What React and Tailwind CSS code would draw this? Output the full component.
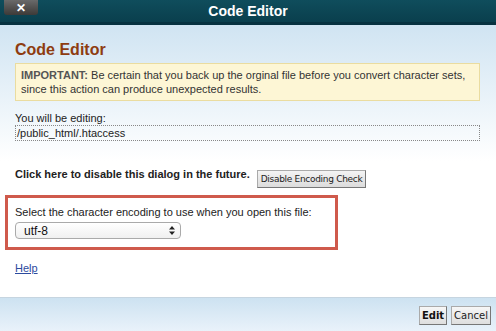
export default function App() {
  return (
    <div className="w-[496px] h-[331px] flex flex-col overflow-hidden bg-white" style={{ fontFamily: '"Liberation Sans", Arial, sans-serif' }}>
      {/* Title bar */}
      <div className="relative h-[25px] shrink-0 bg-gradient-to-b from-[#0f4d5c] to-[#0a3f4d] border-b-[3px] border-[#073240] flex items-center justify-center">
        <div className="absolute left-[4px] top-0 w-[34px] h-[15px] rounded-b-[3px] bg-gradient-to-b from-[#6a6a6a] to-[#3d3a38] flex items-center justify-center">
          <span className="text-white text-[12px] font-bold leading-none">✕</span>
        </div>
        <span className="text-white text-[14px] font-bold">Code Editor</span>
      </div>
      {/* Body */}
      <div className="flex-1 bg-gradient-to-b from-[#d0e4f2] via-white to-white flex flex-col px-[15px] pt-[15px]">
        <div className="text-[16px] font-bold text-[#8e3c10] leading-[20px]">Code Editor</div>
        <div className="mt-[3px] w-[465px] border border-[#eadca0] bg-[#fdf6d5] px-[5px] py-[4px] text-[11px] leading-[14px] text-[#333]">
          <b className="text-[#555]">IMPORTANT:</b> Be certain that you back up the orginal file before you convert character sets, since this action can produce unexpected results.
        </div>
        <div className="mt-[10px] text-[11px] leading-[14px] text-[#222]">You will be editing:</div>
        <div className="w-[465px] border border-dotted border-[#888] px-[1px] text-[11px] leading-[14px] text-[#222]">/public_html/.htaccess</div>
        <div className="mt-[26px] flex items-start">
          <span className="text-[11px] font-bold text-[#222] leading-[14px]">Click here to disable this dialog in the future.</span>
          <button className="ml-[7px] mt-[3px] h-[18px] px-[3px] border border-[#aaa] border-r-[#777] border-b-[#777] bg-gradient-to-b from-[#f4f4f4] to-[#dcdcdc] text-[9px] tracking-[-0.3px] leading-none text-[#222]" style={{ fontFamily: '"DejaVu Sans", Verdana, sans-serif' }}>Disable Encoding Check</button>
        </div>
        <div className="mt-[7px] -ml-[10px] w-[333px] h-[55px] border-[3px] border-[#cf5a4c] pl-[7px] pt-[7px]">
          <div className="text-[11px] leading-[14px] text-[#222]">Select the character encoding to use when you open this file:</div>
          <div className="mt-[3px] w-[166px] h-[17px] rounded-[4px] border border-[#aaa] bg-gradient-to-b from-white to-[#f0f0f0] flex items-center justify-between pl-[8px] pr-[5px]">
            <span className="text-[12px] text-[#111]">utf-8</span>
            <svg width="6" height="9" viewBox="0 0 6 9"><path d="M3 0L6 3.5H0Z M3 9L0 5.5H6Z" fill="#222" /></svg>
          </div>
        </div>
        <a className="mt-[10px] text-[11px] text-[#2c4a9e] underline w-fit">Help</a>
      </div>
      {/* Footer */}
      <div className="h-[34px] shrink-0 border-t border-[#c6d5e0] bg-gradient-to-b from-[#cde2f1] to-[#e9f2fa] flex items-start justify-end pr-[5px] pt-[8px] gap-[4px]">
        <button className="h-[19px] px-[2px] border border-[#aaa] border-r-[#777] border-b-[#777] bg-gradient-to-b from-[#f7f7f7] to-[#dedede] text-[10px] font-bold leading-none text-[#111]" style={{ fontFamily: '"DejaVu Sans", Verdana, sans-serif' }}>Edit</button>
        <button className="h-[19px] px-[2px] border border-[#aaa] border-r-[#777] border-b-[#777] bg-gradient-to-b from-[#f7f7f7] to-[#dedede] text-[10px] leading-none text-[#222]" style={{ fontFamily: '"DejaVu Sans", Verdana, sans-serif' }}>Cancel</button>
      </div>
    </div>
  );
}
